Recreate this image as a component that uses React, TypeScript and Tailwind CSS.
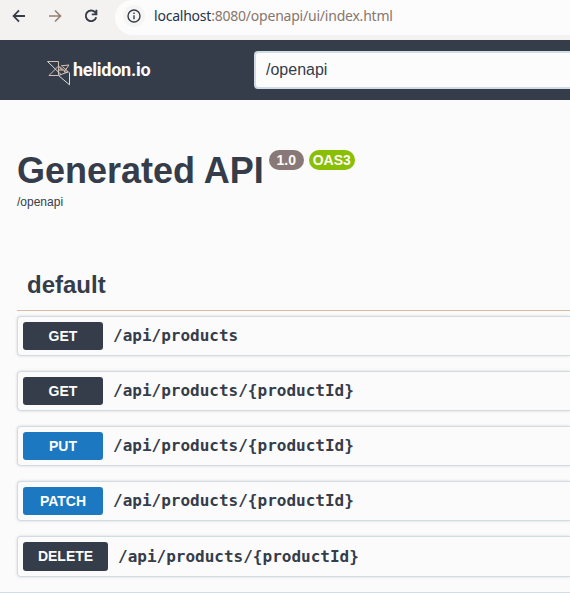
type Operation = { method: string; path: string; badge: string; row: string };

const operations: Operation[] = [
  { method: 'GET', path: '/api/products', badge: 'w-20 h-7 bg-[#353c4a]', row: 'h-10' },
  { method: 'GET', path: '/api/products/{productId}', badge: 'w-20 h-7 bg-[#353c4a]', row: 'h-10' },
  { method: 'PUT', path: '/api/products/{productId}', badge: 'w-20 h-7 bg-[#1c78c0]', row: 'h-10' },
  { method: 'PATCH', path: '/api/products/{productId}', badge: 'w-20 h-7 bg-[#1c78c0]', row: 'h-10' },
  { method: 'DELETE', path: '/api/products/{productId}', badge: 'w-[85px] h-[29px] bg-[#353c4a]', row: 'h-[41px]' },
];

function BrowserBar() {
  return (
    <div className="flex h-10 items-start bg-[#f3f2f1] text-[#353c4a]">
      <svg className="mt-[9px] ml-3 h-[14px] w-[14px]" viewBox="0 0 14 14" fill="none" stroke="currentColor" strokeWidth="1.8">
        <path d="M13 7H2M7 1.3L1.6 7L7 12.7" />
      </svg>
      <svg className="mt-[9px] ml-[22px] h-[14px] w-[14px] text-[#96806f]" viewBox="0 0 14 14" fill="none" stroke="currentColor" strokeWidth="1.6">
        <path d="M1 7H12M7 1.5L12.5 7L7 12.5" />
      </svg>
      <svg className="mt-[9px] ml-[22px] h-[14px] w-[14px]" viewBox="0 0 14 14" fill="none" stroke="currentColor" strokeWidth="1.9">
        <path d="M12.2 8.2A5.3 5.3 0 1 1 11 3.2L12.4 4.7M12.4 .8V5.4H7.8" />
      </svg>
      <div className="ml-[17px] flex h-[35px] flex-1 rounded-l-[18px] bg-[#fcfcfc]">
        <div className="mt-[5px] ml-2 flex h-[22px] w-[22px] items-center justify-center rounded-full bg-[#f6f5f4]">
          <svg className="h-[14px] w-[14px]" viewBox="0 0 14 14" fill="none" stroke="currentColor" strokeWidth="1.4">
            <circle cx="7" cy="7" r="6" />
            <path d="M7 6.2V10.3M7 3.6V5" />
          </svg>
        </div>
        <div className="mt-[6px] ml-[9px] font-['Noto_Sans',sans-serif] text-[14px] leading-5 tracking-[-0.22px] whitespace-nowrap text-[#88766d]">
          <span className="text-[#263448]">localhost</span>:8080/openapi/ui/index.html
        </div>
      </div>
    </div>
  );
}

function Topbar() {
  return (
    <header className="flex h-[60px] bg-[#353c4a]">
      <div className="flex w-[254px] pl-[47px]">
        <svg className="mt-[21px] h-[25px] w-[23px]" viewBox="0 0 23 25" fill="none" strokeWidth="1">
          <path d="M.5 .5H11.5V14.5H2L11.5 5" stroke="#d3bfb2" />
          <path d="M.5 .5L14 13.5M11.5 14.5L22.5 23.8V11.5" stroke="#d9dcda" />
          <path d="M11.5 5.5L16.5 9H12" stroke="#b99f92" strokeWidth="1.6" />
          <path d="M14 4.8L22 4L17 11H21.5L15.5 5.5M12 14.3L21 11" stroke="#e4d5ca" strokeWidth=".9" />
        </svg>
        <span className="mt-[19px] ml-[3px] font-[Roboto,sans-serif] text-[18px] leading-[22px] font-bold tracking-[-0.25px] text-[#fcfcfc]">helidon.io</span>
      </div>
      <div className="mt-[11px] flex h-[38px] flex-1 items-center rounded-l-[4px] border-2 border-r-0 border-[#d0dde5] bg-[#fcfcfc] pb-px pl-[10px] text-[16px] text-[#353c4a]">
        /openapi
      </div>
    </header>
  );
}

export default function App() {
  return (
    <div className="h-[593px] w-[570px] overflow-hidden bg-[#fbfbfb] font-['Liberation_Sans',Arial,sans-serif] text-[#353c4a]">
      <BrowserBar />
      <Topbar />
      <main className="pl-[17px]">
        <div className="flex h-[94px] pt-[50px]">
          <h1 className="pt-px text-[36px] leading-10 font-bold whitespace-nowrap">Generated API</h1>
          <span className="ml-[5px] flex h-5 w-[35px] items-center justify-center rounded-full bg-[#887878] text-[14px] font-bold text-[#fcfcfc]">1.0</span>
          <span className="ml-[5px] flex h-5 w-[46px] items-center justify-center rounded-full bg-[#89bf04] text-[14px] font-bold text-[#fcfcfc]">OAS3</span>
        </div>
        <p className="text-[12px] leading-4">/openapi</p>
        <h2 className="mt-[50px] h-[51px] border-b border-[#d7bea2] pt-[11px] pl-[10px] text-[24px] leading-7 font-bold">default</h2>
        <div className="mt-[5px] flex flex-col gap-[15px]">
          {operations.map(({ method, path, badge, row }, i) => (
            <div key={i} className={`flex items-center rounded-l-[4px] border border-r-0 border-[#d0dde4] pl-[5px] shadow-[0_0_3px_rgba(0,0,0,0.16)] ${row}`}>
              <span className={`flex items-center justify-center rounded-[3px] text-[14px] font-bold text-[#fcfcfc] ${badge}`}>{method}</span>
              <span className="pl-[10px] font-['DejaVu_Sans_Mono',monospace] text-[16px] leading-5 font-bold">{path}</span>
            </div>
          ))}
        </div>
      </main>
      <div className="mt-[15px] h-px bg-[#d0dde8]" />
    </div>
  );
}
